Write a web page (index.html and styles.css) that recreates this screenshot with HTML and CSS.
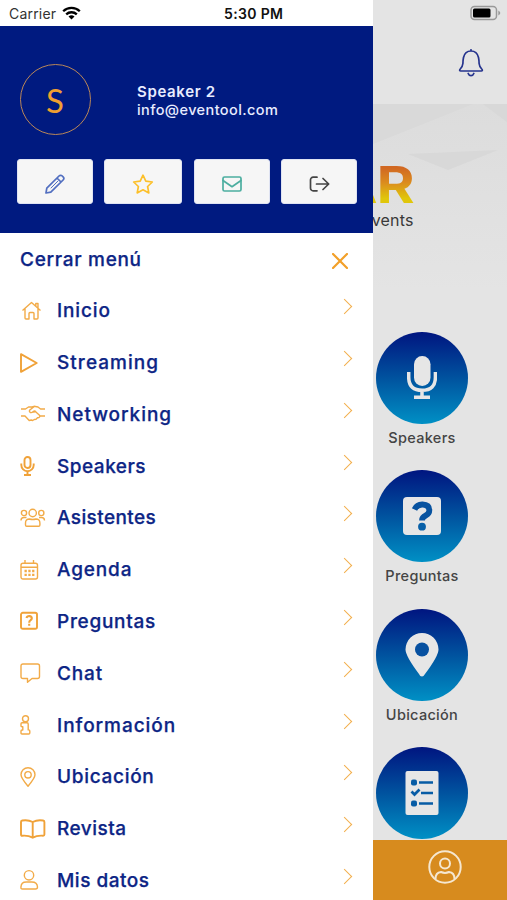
FILE: index.html
```html
<!DOCTYPE html>
<html lang="es">
<head>
<meta charset="utf-8">
<title>Menú</title>
<link rel="stylesheet" href="styles.css">
</head>
<body>
<div class="app">
  <aside class="drawer">
    <div class="status">
      <span class="carrier">Carrier</span>
      <svg class="wifi" width="19" height="14" viewBox="0 0 19 14" fill="none" stroke="#000" stroke-width="2.3"><path d="M1.2 5.2a11.8 11.8 0 0 1 16.6 0M4.2 8.4a7.6 7.6 0 0 1 10.6 0"/><path d="M9.5 13.5 6.5 10.6a4.3 4.3 0 0 1 6 0z" fill="#000" stroke="none"/></svg>
      <span class="time">5:30 PM</span>
    </div>
    <header class="profile">
      <div class="person">
        <div class="avatar">S</div>
        <div class="who"><div class="name">Speaker 2</div><div class="mail">info@eventool.com</div></div>
      </div>
      <div class="actions">
        <button class="action blue"><svg width="20" height="20" viewBox="0 0 20 20"><path d="m1 19 .8-4.800L14 2a2.300 2.300 0 0 1 3.300 0l.8.8a2.300 2.300 0 0 1 0 3.200L5.800 18.200zM12 4l4 4"/><path d="M13 7 6 14" stroke-width="1"/></svg></button>
        <button class="action yellow wide"><svg width="22" height="20" viewBox="0 0 22 20"><path d="m11 1.2 2.8 5.9 6.5.9-4.7 4.5 1.2 6.4-5.8-3.1-5.8 3.1 1.2-6.4L1.700 8l6.500-.9z"/></svg></button>
        <button class="action teal"><svg width="20" height="16" viewBox="0 0 20 16"><rect x="1" y="1" width="18" height="14" rx="1.500"/><path d="m1 4.500 9 6.200 9-6.200"/></svg></button>
        <button class="action dark"><svg width="21" height="16" viewBox="0 0 21 16"><path d="M8 1.200H4.200A2.700 2.700 0 0 0 1.500 4v8a2.700 2.700 0 0 0 2.700 2.800H8M7.500 8h12M14 2.500 19.700 8 14 13.500"/></svg></button>
      </div>
    </header>
    <div class="close"><span>Cerrar menú</span><svg width="16" height="16" viewBox="0 0 16 16"><path d="m1 1 14 14M15 1 1 15"/></svg></div>
    <nav class="menu">
      <a class="item"><svg width="24" height="20" viewBox="0 0 24 20"><path d="M2.500 9.500 11.500 1.500l9 8M5 7.500V17q0 1 1 1h3v-5.500q0-1 1-1h3q1 0 1 1V18h3q1 0 1-1V7.500M18 7V2.500h-2.200v2.800"/></svg><span class="wide3">Inicio</span><i></i></a>
      <a class="item bold"><svg width="24" height="20" viewBox="0 0 24 20"><path d="M1 1.200 16.700 10 1 18.800z"/></svg><span class="wide5">Streaming</span><i></i></a>
      <a class="item"><svg width="26" height="20" viewBox="0 0 26 20"><path d="M1 5h4.500l3-2h3.500l2-.7L18 3l2.500 2H25M14 2.700 9.800 6q-1 1.500.5 2.500 1.500.500 3-1l1.500-.5 4.700 4.200q1 1.300-.5 2.300l-1.500.2-1.500 1.500-1.800.3-1.500 1-1.500-.5-2 .5L5 12H1M12.500 8q2.500.5 3.500-1M19.500 12H25"/></svg><span class="wide4">Networking</span><i></i></a>
      <a class="item bold"><svg width="24" height="20" viewBox="0 0 24 20"><rect x="4.500" y="1" width="6" height="11" rx="3"/><path d="M1.300 7.500V9a6.200 6.200 0 0 0 12.400 0V7.500M7.500 15.200V19M4 19h7"/></svg><span>Speakers</span><i></i></a>
      <a class="item"><svg width="26" height="20" viewBox="0 0 26 20"><circle cx="12.700" cy="5" r="3.700"/><circle cx="4" cy="5" r="2.600"/><circle cx="21.300" cy="5" r="2.600"/><path d="M5.500 17v-2q0-4 4-4 3.200 1 6.400 0 4 0 4 4v2q0 1.200-1.200 1.200h-12q-1.200 0-1.200-1.200zM1 12.500Q1 9.500 4 9.500h2.500M24.500 12.500q0-3-3-3H19"/></svg><span class="tight">Asistentes</span><i></i></a>
      <a class="item"><svg width="24" height="20" viewBox="0 0 24 20"><rect x="1" y="3.300" width="16.500" height="15.700" rx="2"/><path d="M1 7.200h16.500M5 3.300V0M13.500 3.300V0"/><path d="M4.500 11h10M4.500 14.800h10" stroke-width="2.300" stroke-dasharray="2.300 1.500"/></svg><span class="wide3">Agenda</span><i></i></a>
      <a class="item bold"><svg width="24" height="20" viewBox="0 0 24 20"><rect x="1" y="1.800" width="16" height="16" rx="1.800"/><path d="M6.500 7Q7 5 9.300 5q2.500.2 2.500 2.300 0 1.300-1.400 2Q9.200 10 9.200 11.700M9.200 12.800v2" stroke-width="2.100"/></svg><span class="wide2">Preguntas</span><i></i></a>
      <a class="item"><svg width="24" height="20" viewBox="0 0 24 20"><path d="M3 1h14.500q2 0 2 2v10.500q0 2-2 2H12l-4.500 3.700v-3.700H3q-2 0-2-2V3q0-2 2-2z"/></svg><span class="wide3">Chat</span><i></i></a>
      <a class="item"><svg width="24" height="20" viewBox="0 0 24 20"><circle cx="5.500" cy="3.700" r="3"/><path d="M2 7.700h5q1.200 0 1.200 1.200v6h.6q1 0 1 1V18q0 1-1 1H2q-1 0-1-1v-2q0-1 1-1h.8v-3.300H2q-1 0-1-1v-2q0-1 1-1z"/></svg><span class="wide4">Información</span><i></i></a>
      <a class="item"><svg width="24" height="20" viewBox="0 0 24 20"><path d="M8 19.200Q1 10.800 1 7.700a7 7 0 0 1 14 0Q15 10.800 8 19.200z"/><circle cx="8" cy="7.800" r="3.200"/></svg><span class="wide2">Ubicación</span><i></i></a>
      <a class="item bold"><svg width="26" height="20" viewBox="0 0 26 20"><path d="M12.700 3Q8 .5 2.300 1.500 1 1.700 1 3v12.500q0 1.300 1.300 1.200 6-.5 10.400 2 4.400-2.500 10.400-2 1.300 0 1.300-1.200V3q0-1.300-1.300-1.500Q17.400.5 12.700 3zv15.700"/></svg><span>Revista</span><i></i></a>
      <a class="item"><svg width="24" height="20" viewBox="0 0 24 20"><circle cx="9" cy="5.300" r="4.700"/><path d="M6.300 12h5.500q5.500 0 5.700 5 0 2-2 2h-13q-2 0-1.500-2 0-5 5.300-5z"/></svg><span>Mis datos</span><i></i></a>
    </nav>
  </aside>
  <main class="page">
    <div class="topbar">
      <svg class="battery" width="31" height="16" viewBox="0 0 31 16"><rect x="1" y="1.500" width="25.500" height="13" rx="3.500" fill="none" stroke="#999" stroke-width="1.500"/><rect x="3" y="3.500" width="17.500" height="9" rx="1.500"/><path d="M28.300 5.500v5q2-1.200 2-2.500t-2-2.500z" fill="#999"/></svg>
      <svg class="bell" width="26" height="28" viewBox="0 0 26 28"><path d="M13 2q6 0 7.500 6.500.6 3 .6 6 .3 3.500 3 6 .7 1.500-.8 1.500H2.700q-1.500 0-.8-1.500 2.700-2.500 3-6 0-3 .6-6Q7 2 13 2zM10.200 24.500q.8 2.200 2.800 2.200t2.800-2.200M13 2V.8"/></svg>
    </div>
    <div class="hero">
      <svg class="facets" width="134" height="186" viewBox="0 0 134 186"><defs><linearGradient id="fade" x2="0" y2="1"><stop stop-color="#dcdcdc"/><stop offset=".5" stop-color="#e0e0e0"/><stop offset="1" stop-color="#e4e4e4"/></linearGradient></defs><path d="M0 0h134v186H0z" fill="url(#fade)"/><path d="M0 0h100L0 40z" fill="#d9d9d9"/><path d="m110 0 24 18V0zM35 50l40 16 50-20z" fill="#d8d8d8"/></svg>
      <div class="brand"><div class="logo">AR</div><div class="tag">Events</div></div>
    </div>
    <div class="tiles">
      <div class="tile"><div class="disc"><svg width="30" height="44" viewBox="0 0 30 44"><rect x="7" y="0" width="16.500" height="30" rx="8.200" fill="#e6e6e6"/><path d="M1.700 16v5q0 13.300 13.400 13.300T28.400 21v-5M15 34v7M7 41.200h16" fill="none" stroke="#e6e6e6" stroke-width="3.500"/></svg></div><span>Speakers</span></div>
      <div class="tile"><div class="disc"><svg width="38" height="38" viewBox="0 0 38 38"><rect width="38" height="38" rx="4" fill="#e6e6e6"/><path d="M11.500 12.500Q14 7.300 19.500 7.500q7 .4 6.800 6 0 3-3.500 5-3.800 1.700-3.800 5" fill="none" stroke="#0853a0" stroke-width="5.800"/><circle cx="19" cy="29.700" r="3.900" fill="#0860a8"/></svg></div><span>Preguntas</span></div>
      <div class="tile"><div class="disc"><svg width="34" height="44" viewBox="0 0 34 44"><path d="M17 43.500q-2 0-3-2.500Q.5 23 .5 16.500a16.500 16.500 0 0 1 33 0Q33.500 23 20 41q-1.500 2.500-3 2.500z" fill="#e6e6e6"/><circle cx="17" cy="16.500" r="7" fill="#0650a0"/></svg></div><span>Ubicación</span></div>
      <div class="tile"><div class="disc"><svg width="34" height="44" viewBox="0 0 34 44"><rect x=".5" width="33" height="44" rx="2" fill="#e6e6e6"/><g fill="none" stroke="#075ca5" stroke-width="2.700"><path d="M14 11.500h14M16 22h12M14 32.500h14M6.500 20.500l3 3 5-5"/></g><rect x="6" y="8.500" width="6" height="6" rx="2" fill="#075ca5"/><rect x="6" y="29.500" width="6" height="6" rx="2" fill="#075ca5"/></svg></div></div>
    </div>
    <footer class="tabs"><svg width="34" height="34" viewBox="0 0 34 34"><circle cx="17" cy="17" r="15.700"/><circle cx="17" cy="13.500" r="5"/><path d="M7.500 29q0-6.500 5.500-7 4 1.800 8 0 5.500.5 5.500 7"/></svg></footer>
  </main>
</div>
</body>
</html>
```

FILE: styles.css
```css
* { box-sizing: border-box; }
body { margin: 0; font-family: Inter, "Liberation Sans", sans-serif; background: #e4e4e4; }
.app { display: flex; width: 507px; height: 900px; overflow: hidden; }

.drawer { width: 372.5px; flex: none; background: #fff; }
.status { height: 25.500px; display: flex; align-items: center; padding: 2px 0 0 9px; font-size: 14px; color: #111; }
.carrier { width: 47px; letter-spacing: .2px; color: #333; }
.wifi { margin: -2px 0 0 6px; }
.time { margin-left: 143px; font-weight: 600; letter-spacing: .35px; white-space: nowrap; }

.profile { height: 207.500px; background: #001a80; padding: 38.500px 15px 0 16.500px; }
.person { display: flex; align-items: center; padding-left: 3px; }
.avatar { width: 71px; height: 71px; border: 1.500px solid #b98658; border-radius: 50%; color: #f0a030; font: 33px/70px Lato, sans-serif; text-align: center; }
.who { margin-left: 46.500px; padding-top: 2px; color: #e8ecff; font-size: 15px; line-height: 18px; }
.name { font-weight: 600; letter-spacing: .65px; }
.mail { font-weight: 500; font-size: 14.500px; letter-spacing: .4px; }
.actions { display: flex; justify-content: space-between; margin-top: 24px; }
.action { width: 76px; height: 45px; padding: 5px 0 0; border: 1px solid #dfe3f2; border-radius: 3px; background: #f6f6f6; display: flex; align-items: center; justify-content: center; }
.action.wide { width: 78px; }
.action svg { fill: none; stroke: currentColor; stroke-width: 1.700; stroke-linejoin: round; stroke-linecap: round; }
.blue { color: #526fc0; }
.yellow { color: #fcc02b; }
.teal { color: #4caea0; }
.dark { color: #444; }

.close, .item { display: flex; align-items: center; color: #0d2585; font-size: 19px; font-weight: 500; -webkit-text-stroke: .25px #0d2585; }
.close { height: 52px; justify-content: space-between; padding: 0 25px 0 20px; letter-spacing: .7px; }
.close svg { margin-top: 4px; fill: none; stroke: #f2a02a; stroke-width: 2.200; stroke-linecap: round; }
.item { height: 51.770px; padding: 0 18px 0 20px; letter-spacing: .5px; }
.item svg { flex: none; fill: none; stroke: #f2ab48; stroke-width: 1.400; stroke-linejoin: round; overflow: visible; }
.item.bold svg { stroke: #f0a239; stroke-width: 1.900; }
.item span { width: 270px; }
.item .tight { letter-spacing: .4px; }
.item .wide2 { letter-spacing: .7px; }
.item .wide3 { letter-spacing: .85px; }
.item .wide4 { letter-spacing: .95px; }
.item .wide5 { letter-spacing: 1.050px; }
.item svg[width="24"] + span { margin-left: 13px; }
.item svg[width="26"] + span { margin-left: 11px; }
.item i { width: 11px; height: 11px; margin: -8px 5px 0 auto; border: solid #f2ae4b; border-width: 1.600px 1.600px 0 0; transform: rotate(45deg); }

.page { flex: 1; min-width: 0; display: flex; flex-direction: column; overflow: hidden; background: #e4e4e4; }
.topbar { height: 104px; flex: none; display: flex; flex-direction: column; align-items: flex-end; padding: 5px 6px 0 0; }
.bell { margin: 28px 17px 0 0; fill: none; stroke: #25338d; stroke-width: 1.700; stroke-linecap: round; }
.hero { height: 186px; flex: none; display: grid; }
.facets, .brand { grid-area: 1 / 1; }
.brand { width: 41px; margin-top: 54px; display: flex; flex-direction: column; align-items: flex-end; overflow: hidden; }
.logo { font-size: 51px; font-weight: 700; line-height: 54px; letter-spacing: -1px; background: linear-gradient(#d16822 18%, #db8b1e 45%, #e0c60b 75%); -webkit-background-clip: text; background-clip: text; color: transparent; transform: scaleX(1.14); transform-origin: right; }
.tag { font-size: 16px; line-height: 16px; color: #393939; letter-spacing: .15px; }
.tiles { height: 550px; flex: none; padding: 42px 0 0 3.500px; }
.tile { width: 92px; height: 138.300px; display: flex; flex-direction: column; align-items: center; color: #444; font-size: 14.500px; font-weight: 500; letter-spacing: .3px; }
.disc { width: 92px; height: 92px; flex: none; border-radius: 50%; background: linear-gradient(#001580, #0055a0 52%, #0090c5); display: flex; align-items: center; justify-content: center; }
.tile span { margin-top: 5px; line-height: 18px; }
.tabs { flex: 1; background: #d78b1e; padding: 10px 0 0 55px; }
.tabs svg { fill: none; stroke: #f5e7d0; stroke-width: 2; }
```
